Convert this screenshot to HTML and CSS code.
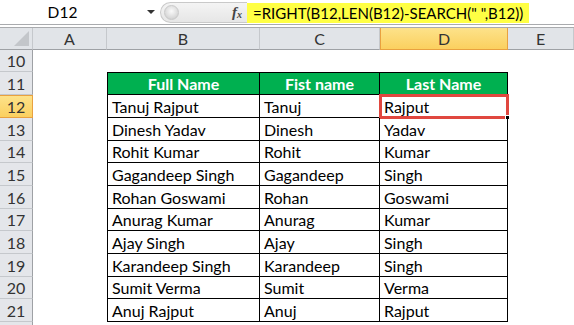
FILE: index.html
```html
<!DOCTYPE html>
<html>
<head>
<meta charset="utf-8">
<link rel="stylesheet" href="styles.css">
</head>
<body>
<div class="fbar">
  <div class="namebox"><span class="nb-text">D12</span><span class="nb-arrow"></span></div>
  <div class="fx-area"><span class="knob"></span><span class="fx">f<sub>x</sub></span></div>
  <div class="formula"><span class="ftext">=RIGHT(B12,LEN(B12)-SEARCH(" ",B12))</span></div>
</div>
<div class="gap"></div>
<div class="sheet">
  <div class="corner"><span class="tri"></span></div>
  <div class="ch">A</div><div class="ch">B</div><div class="ch">C</div><div class="ch sel">D</div><div class="ch">E</div>

  <div class="rh">10</div><div class="c"></div><div class="c"></div><div class="c"></div><div class="c"></div><div class="c"></div>

  <div class="rh">11</div><div class="c"></div><div class="c th l t">Full Name</div><div class="c th t">Fist name</div><div class="c th t">Last Name</div><div class="c"></div>

  <div class="rh sel">12</div><div class="c"></div><div class="c td l">Tanuj Rajput</div><div class="c td">Tanuj</div><div class="c td active">Rajput<span class="handle"></span></div><div class="c"></div>
  <div class="rh">13</div><div class="c"></div><div class="c td l">Dinesh Yadav</div><div class="c td">Dinesh</div><div class="c td">Yadav</div><div class="c"></div>
  <div class="rh">14</div><div class="c"></div><div class="c td l">Rohit Kumar</div><div class="c td">Rohit</div><div class="c td">Kumar</div><div class="c"></div>
  <div class="rh">15</div><div class="c"></div><div class="c td l">Gagandeep Singh</div><div class="c td">Gagandeep</div><div class="c td">Singh</div><div class="c"></div>
  <div class="rh">16</div><div class="c"></div><div class="c td l">Rohan Goswami</div><div class="c td">Rohan</div><div class="c td">Goswami</div><div class="c"></div>
  <div class="rh">17</div><div class="c"></div><div class="c td l">Anurag Kumar</div><div class="c td">Anurag</div><div class="c td">Kumar</div><div class="c"></div>
  <div class="rh">18</div><div class="c"></div><div class="c td l">Ajay Singh</div><div class="c td">Ajay</div><div class="c td">Singh</div><div class="c"></div>
  <div class="rh">19</div><div class="c"></div><div class="c td l">Karandeep Singh</div><div class="c td">Karandeep</div><div class="c td">Singh</div><div class="c"></div>
  <div class="rh">20</div><div class="c"></div><div class="c td l">Sumit Verma</div><div class="c td">Sumit</div><div class="c td">Verma</div><div class="c"></div>
  <div class="rh">21</div><div class="c"></div><div class="c td l">Anuj Rajput</div><div class="c td">Anuj</div><div class="c td">Rajput</div><div class="c"></div>
  <div class="rh last"></div><div class="c"></div><div class="c"></div><div class="c"></div><div class="c"></div><div class="c"></div>
</div>
</body>
</html>
```
FILE: styles.css
```css
* { box-sizing: border-box; }
html, body { margin: 0; padding: 0; background: #fff; overflow: hidden; }
body {
  width: 574px; height: 325px;
  font-family: Lato, "Liberation Sans", sans-serif;
  font-size: 16px;
  color: #000;
}
.fbar {
  display: flex;
  height: 24px;
  background: #fff;
}
.namebox {
  width: 160px;
  display: flex;
  align-items: center;
}
.nb-text { flex: 1; text-align: center; padding-right: 22px; font-size: 15.5px; }
.nb-arrow {
  width: 0; height: 0;
  border-left: 4px solid transparent;
  border-right: 4px solid transparent;
  border-top: 4px solid #333;
  margin-right: 5px;
}
.fx-area {
  width: 87px;
  margin: 2px 0 1px;
  background: linear-gradient(#f4f4f4, #e6e6e6);
  border: 1px solid #c9c9c9;
  border-right: none;
  border-radius: 11px 0 0 11px;
  display: flex;
  align-items: center;
  justify-content: space-between;
  padding: 0 5px 0 3px;
}
.knob {
  width: 15px; height: 15px;
  border-radius: 50%;
  background: radial-gradient(circle at 50% 40%, #fafafa 0%, #dcdcdc 60%, #c4c4c4 100%);
  border: 1px solid #c9c9c9;
}
.fx {
  font-family: "Liberation Serif", serif;
  font-style: italic;
  font-weight: bold;
  font-size: 15px;
  color: #444;
}
.fx sub { font-size: 10px; vertical-align: -1px; }
.formula {
  flex: 1;
  display: flex;
  align-items: stretch;
  padding-top: 3px;
  padding-bottom: 1px;
}
.ftext {
  background: #ffff44;
  padding: 1px 6px 0 6px;
  font-size: 15px;
  line-height: 19px;
  white-space: pre;
}
.gap {
  height: 4px;
  border-top: 1px solid #a9abae;
  border-bottom: 1px solid #a9abae;
  background: #fff;
}
.sheet {
  display: grid;
  grid-template-columns: 33px 74px 153px 120px 128px 66px;
  grid-template-rows: 22px 22px 23px 23px 23px 22px 23px 23px 22px 23px 23px 22px 23px 3px;
}
.corner {
  background: #e1e4e8;
  border-right: 1px solid #c5c8cc;
  border-bottom: 1px solid #9ea1a5;
  position: relative;
}
.tri {
  position: absolute;
  right: 3px; bottom: 3px;
  width: 0; height: 0;
  border-left: 15px solid transparent;
  border-bottom: 15px solid #c3c6ca;
}
.ch {
  background: #e1e4e8;
  border-right: 1px solid #c5c8cc;
  border-bottom: 1px solid #9ea1a5;
  display: flex;
  align-items: center;
  justify-content: center;
  color: #333;
  font-size: 16px;
}
.ch.sel {
  background: linear-gradient(#fde28a, #fbd05f);
  border: 1px solid #e9a13f;
  border-top: none;
}
.rh {
  background: #e4e6ea;
  border-right: 1px solid #9ea1a5;
  border-bottom: 1px solid #c5c8cc;
  display: flex;
  align-items: center;
  justify-content: center;
  color: #333;
  font-size: 16px;
}
.rh.last { border-bottom: none; }
.rh.sel {
  background: linear-gradient(#fde28a, #fbd05f);
  border: 1px solid #e9a13f;
  border-left: none;
}
.c { position: relative; }
.td, .th {
  border-right: 1px solid #000;
  border-bottom: 1px solid #000;
  display: flex;
  align-items: center;
  white-space: nowrap;
}
.l { border-left: 1px solid #000; }
.t { border-top: 1px solid #000; }
.td { padding-left: 4px; font-size: 16px; }
.th {
  background: #00b050;
  color: #fff;
  font-weight: bold;
  justify-content: center;
  font-size: 16px;
}
.active { outline: 3px solid #e0473f; outline-offset: -2px; }
.handle {
  position: absolute;
  right: -3px; bottom: -3px;
  width: 5px; height: 5px;
  background: #000;
  border: 1px solid #fff;
}
```
